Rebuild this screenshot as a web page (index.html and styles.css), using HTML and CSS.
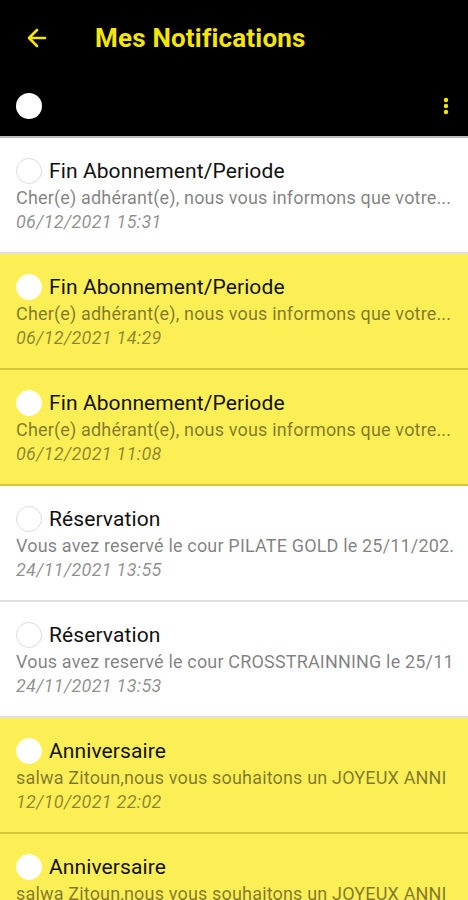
FILE: index.html
```html
<!DOCTYPE html>
<html>

<head>
    <title>Mes Notifications</title>
    <link rel="stylesheet" href="styles.css">
</head>

<body>
    <div class="header">
        <div class="topbar">
            <svg class="back" width="24" height="24" viewBox="0 0 24 24">
                <path d="M20 12H5M12 4l-8 8 8 8" fill="none" stroke="#f5e600" stroke-width="2.6" stroke-linecap="round" stroke-linejoin="round"/>
            </svg>
            <h1>Mes Notifications</h1>
        </div>
        <div class="toolbar">
            <span class="check all"></span>
            <svg class="more" width="6" height="18" viewBox="0 0 6 18">
                <circle cx="3" cy="3" r="2.2" fill="#f5e600"/>
                <circle cx="3" cy="9" r="2.2" fill="#f5e600"/>
                <circle cx="3" cy="15" r="2.2" fill="#f5e600"/>
            </svg>
        </div>
    </div>

    <div class="list">
        <div class="item">
            <div class="title"><span class="check"></span>Fin Abonnement/Periode</div>
            <div class="msg">Cher(e) adhérant(e), nous vous informons que votre...</div>
            <div class="date">06/12/2021 15:31</div>
        </div>
        <div class="item unread">
            <div class="title"><span class="check"></span>Fin Abonnement/Periode</div>
            <div class="msg">Cher(e) adhérant(e), nous vous informons que votre...</div>
            <div class="date">06/12/2021 14:29</div>
        </div>
        <div class="item unread">
            <div class="title"><span class="check"></span>Fin Abonnement/Periode</div>
            <div class="msg">Cher(e) adhérant(e), nous vous informons que votre...</div>
            <div class="date">06/12/2021 11:08</div>
        </div>
        <div class="item">
            <div class="title"><span class="check"></span>Réservation</div>
            <div class="msg">Vous avez reservé le cour PILATE GOLD le 25/11/202.</div>
            <div class="date">24/11/2021 13:55</div>
        </div>
        <div class="item">
            <div class="title"><span class="check"></span>Réservation</div>
            <div class="msg">Vous avez reservé le cour CROSSTRAINNING le 25/11</div>
            <div class="date">24/11/2021 13:53</div>
        </div>
        <div class="item unread">
            <div class="title"><span class="check"></span>Anniversaire</div>
            <div class="msg">salwa Zitoun,nous vous souhaitons un JOYEUX ANNI</div>
            <div class="date">12/10/2021 22:02</div>
        </div>
        <div class="item unread">
            <div class="title"><span class="check"></span>Anniversaire</div>
            <div class="msg">salwa Zitoun,nous vous souhaitons un JOYEUX ANNI</div>
        </div>
    </div>
</body>

</html>
```

FILE: styles.css
```css
body {
    margin: 0;
    font-family: Roboto, "Liberation Sans", sans-serif;
    background-color: #fff;
    width: 468px;
    height: 900px;
    overflow: hidden;
}

.header {
    background-color: #000;
    height: 136px;
    border-bottom: 2px solid #bdbdbd;
}

.topbar {
    display: flex;
    align-items: center;
    height: 76px;
    padding-left: 25px;
}

.back {
    margin-right: 46px;
}

h1 {
    margin: 0;
    color: #f5e600;
    font-size: 26px;
    font-weight: bold;
    letter-spacing: 0.2px;
}

.toolbar {
    display: flex;
    align-items: center;
    justify-content: space-between;
    height: 60px;
    padding: 0 19px 0 16px;
}

.check {
    display: inline-block;
    width: 24px;
    height: 24px;
    border-radius: 50%;
    background-color: #fff;
    border: 1px solid #ddd;
    flex-shrink: 0;
}

.check.all {
    width: 26px;
    height: 26px;
    border: none;
}

.list {
    height: 762px;
    overflow: hidden;
}

.item {
    height: 116px;
    padding: 19px 0 0 16px;
    box-sizing: border-box;
    border-bottom: 2px solid #e0e0e0;
    background-color: #fff;
    overflow: hidden;
}

.item.unread {
    background-color: #fcee55;
    border-bottom-color: #d6c63a;
}

.item.unread .check {
    border-color: #fff;
}

.title {
    display: flex;
    align-items: center;
    gap: 7px;
    font-size: 21px;
    color: #111;
    height: 28px;
    letter-spacing: 0.1px;
}

.msg {
    font-size: 18px;
    color: rgba(0, 0, 0, 0.5);
    white-space: nowrap;
    overflow: hidden;
    margin-top: 1px;
    line-height: 24px;
    letter-spacing: 0.17px;
}

.date {
    font-size: 18px;
    font-style: italic;
    color: rgba(0, 0, 0, 0.45);
    line-height: 24px;
    letter-spacing: 0.3px;
}
```
